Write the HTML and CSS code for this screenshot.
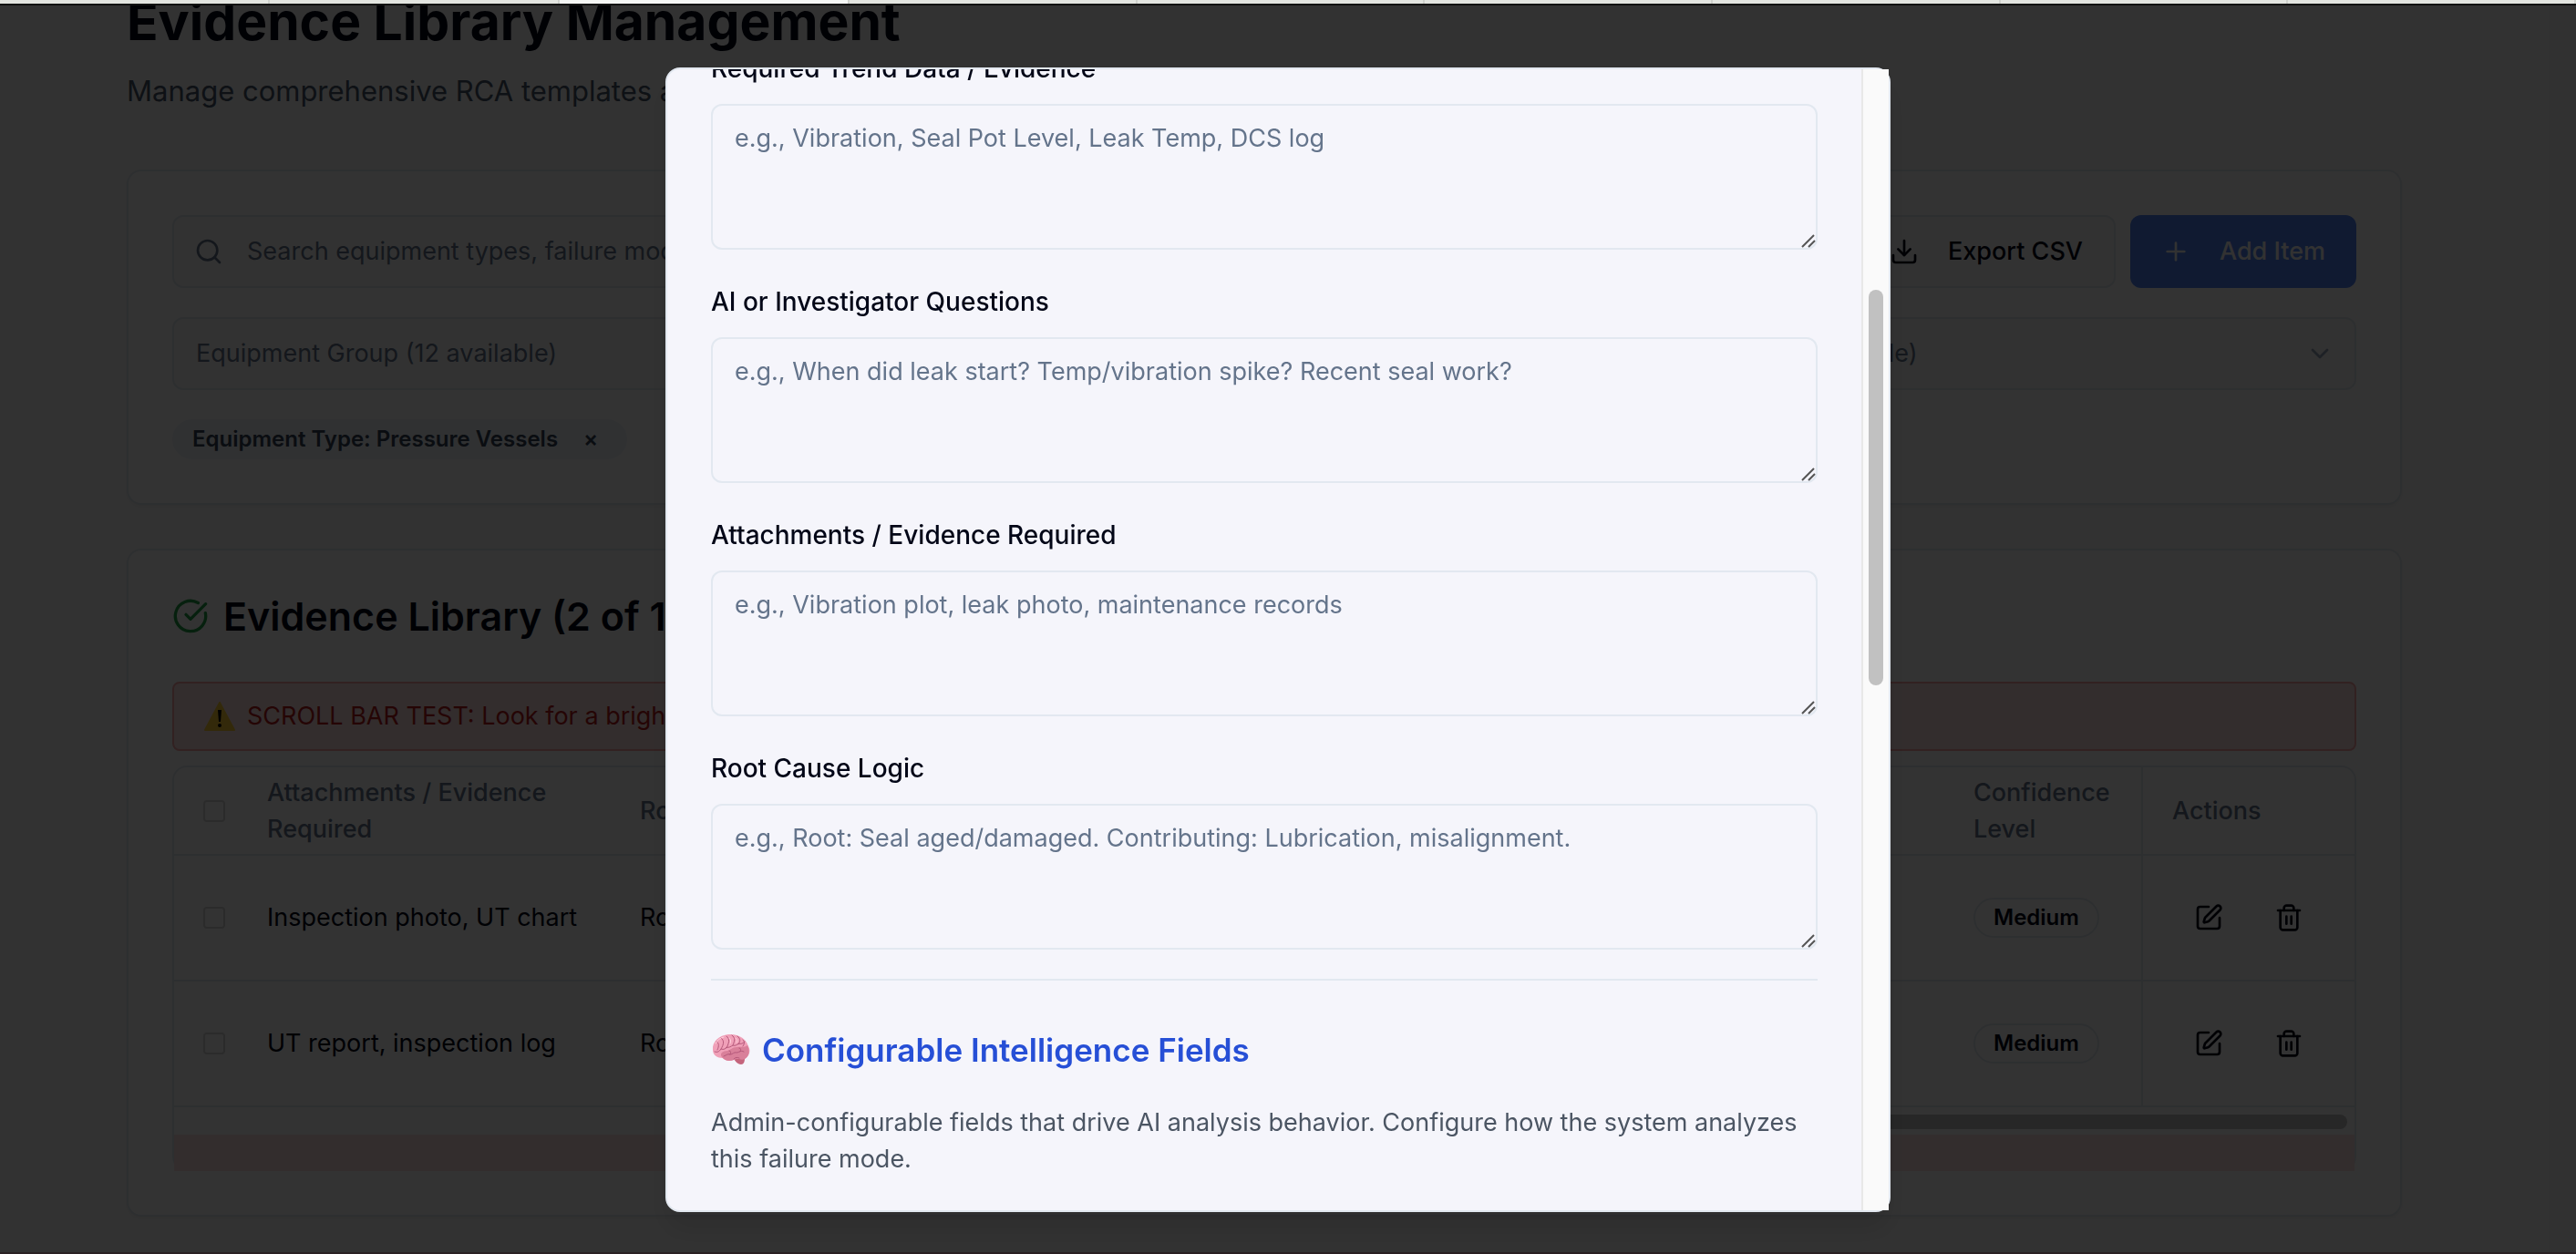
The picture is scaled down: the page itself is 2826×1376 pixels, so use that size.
FILE: index.html
```html
<!DOCTYPE html>
<html lang="en">
<head>
<meta charset="utf-8">
<title>Evidence Library Management</title>
<link rel="stylesheet" href="styles.css">
</head>
<body>
<div class="tabstrip" aria-hidden="true">
  <span class="tab tab-first"></span><span class="tab tab-second"></span><span class="tab tab-active"></span><span class="tab"></span><span class="tab"></span><span class="tab"></span><span class="tab"></span><span class="tab"></span><span class="tab"></span>
</div>
<div class="viewport">
<main class="page">
  <header class="page-head">
    <h1>Evidence Library Management</h1>
    <p>Manage comprehensive RCA templates and evidence requirements</p>
  </header>

  <section class="card filters">
    <div class="toolbar">
      <div class="search">
        <svg class="icon" viewBox="0 0 24 24"><circle cx="11" cy="11" r="8"/><path d="m21 21-4.3-4.3"/></svg>
        <input type="text" aria-label="Search" placeholder="Search equipment types, failure modes, or codes...">
      </div>
      <button class="btn btn-outline" type="button">
        <svg class="icon" viewBox="0 0 24 24"><path d="M21 15v4a2 2 0 0 1-2 2H5a2 2 0 0 1-2-2v-4"/><path d="m7 10 5 5 5-5"/><path d="M12 15V3"/></svg>
        Export CSV
      </button>
      <button class="btn btn-primary" type="button">
        <svg class="icon" viewBox="0 0 24 24"><path d="M5 12h14"/><path d="M12 5v14"/></svg>
        Add Item
      </button>
    </div>
    <div class="selects">
      <div class="select-wrap">
        <select aria-label="Equipment group"><option>Equipment Group (12 available)</option></select>
        <svg class="icon chevron" viewBox="0 0 24 24"><path d="m6 9 6 6 6-6"/></svg>
      </div>
      <div class="select-wrap">
        <select aria-label="Equipment type"><option>Equipment Type (1 selected)</option></select>
        <svg class="icon chevron" viewBox="0 0 24 24"><path d="m6 9 6 6 6-6"/></svg>
      </div>
      <div class="select-wrap">
        <select aria-label="Subtype"><option>Subtype (8 available)</option></select>
        <svg class="icon chevron" viewBox="0 0 24 24"><path d="m6 9 6 6 6-6"/></svg>
      </div>
    </div>
    <div class="chips">
      <span class="chip">Equipment Type: Pressure Vessels <button type="button" aria-label="Remove filter">×</button></span>
    </div>
  </section>

  <section class="card library">
    <h2><svg class="icon icon-ok" viewBox="0 0 24 24"><path d="M21.801 10A10 10 0 1 1 17 3.335"/><path d="m9 11 3 3L22 4"/></svg>Evidence Library (2 of 100 items)</h2>
    <div class="alert">
      <svg class="warn" viewBox="0 0 36 36"><path d="M18 3 34 33H2Z" fill="#fc3" stroke="#fc3" stroke-width="2" stroke-linejoin="round"/><path d="M16 11h4l-1 13h-2z" fill="#000"/><circle cx="18" cy="28" r="2" fill="#000"/></svg>
      <span>SCROLL BAR TEST: Look for a bright scrollbar below</span>
    </div>
    <div class="table-box">
      <table>
        <colgroup><col class="c-check"><col class="c-attach"><col><col class="c-conf"><col class="c-act"></colgroup>
        <thead>
          <tr>
            <th><input type="checkbox" aria-label="Select all"></th>
            <th>Attachments / Evidence Required</th>
            <th>Root Cause Logic</th>
            <th>Confidence Level</th>
            <th class="pinned">Actions</th>
          </tr>
        </thead>
        <tbody>
          <tr>
            <td><input type="checkbox" aria-label="Select row 1"></td>
            <td>Inspection photo, UT chart</td>
            <td>Root: Corrosion</td>
            <td><span class="badge">Medium</span></td>
            <td class="pinned"><div class="actions">
              <button type="button" aria-label="Edit"><svg class="icon" viewBox="0 0 24 24"><path d="M12 3H5a2 2 0 0 0-2 2v14a2 2 0 0 0 2 2h14a2 2 0 0 0 2-2v-7"/><path d="M18.375 2.625a1 1 0 0 1 3 3l-9.013 9.014a2 2 0 0 1-.853.505l-2.873.84a.5.5 0 0 1-.62-.62l.84-2.873a2 2 0 0 1 .506-.852z"/></svg></button>
              <button type="button" aria-label="Delete"><svg class="icon" viewBox="0 0 24 24"><path d="M3 6h18"/><path d="M19 6v14c0 1-1 2-2 2H7c-1 0-2-1-2-2V6"/><path d="M8 6V4c0-1 1-2 2-2h4c1 0 2 1 2 2v2"/><path d="M10 11v6"/><path d="M14 11v6"/></svg></button>
            </div></td>
          </tr>
          <tr>
            <td><input type="checkbox" aria-label="Select row 2"></td>
            <td>UT report, inspection log</td>
            <td>Root: Fatigue</td>
            <td><span class="badge">Medium</span></td>
            <td class="pinned"><div class="actions">
              <button type="button" aria-label="Edit"><svg class="icon" viewBox="0 0 24 24"><path d="M12 3H5a2 2 0 0 0-2 2v14a2 2 0 0 0 2 2h14a2 2 0 0 0 2-2v-7"/><path d="M18.375 2.625a1 1 0 0 1 3 3l-9.013 9.014a2 2 0 0 1-.853.505l-2.873.84a.5.5 0 0 1-.62-.62l.84-2.873a2 2 0 0 1 .506-.852z"/></svg></button>
              <button type="button" aria-label="Delete"><svg class="icon" viewBox="0 0 24 24"><path d="M3 6h18"/><path d="M19 6v14c0 1-1 2-2 2H7c-1 0-2-1-2-2V6"/><path d="M8 6V4c0-1 1-2 2-2h4c1 0 2 1 2 2v2"/><path d="M10 11v6"/><path d="M14 11v6"/></svg></button>
            </div></td>
          </tr>
        </tbody>
      </table>
      <div class="h-scroll"><div class="h-thumb"></div></div>
      <div class="h-zone"></div>
    </div>
  </section>
</main>
<div class="page-scroll"></div>
</div>

<div class="overlay">
  <div class="dialog" role="dialog" aria-modal="true" aria-label="Add evidence item">
    <div class="dialog-body">
      <form class="form">
        <div class="field">
          <label for="trend">Required Trend Data / Evidence</label>
          <div class="area"><textarea id="trend" placeholder="e.g., Vibration, Seal Pot Level, Leak Temp, DCS log"></textarea><svg class="grip" viewBox="0 0 16 16"><path d="M1 15 14 2M8 15 15 8"/></svg></div>
        </div>
        <div class="field">
          <label for="questions">AI or Investigator Questions</label>
          <div class="area"><textarea id="questions" placeholder="e.g., When did leak start? Temp/vibration spike? Recent seal work?"></textarea><svg class="grip" viewBox="0 0 16 16"><path d="M1 15 14 2M8 15 15 8"/></svg></div>
        </div>
        <div class="field">
          <label for="attach">Attachments / Evidence Required</label>
          <div class="area"><textarea id="attach" placeholder="e.g., Vibration plot, leak photo, maintenance records"></textarea><svg class="grip" viewBox="0 0 16 16"><path d="M1 15 14 2M8 15 15 8"/></svg></div>
        </div>
        <div class="field">
          <label for="root">Root Cause Logic</label>
          <div class="area"><textarea id="root" placeholder="e.g., Root: Seal aged/damaged. Contributing: Lubrication, misalignment."></textarea><svg class="grip" viewBox="0 0 16 16"><path d="M1 15 14 2M8 15 15 8"/></svg></div>
        </div>
        <div class="config">
          <h3>
            <svg class="brain" viewBox="0 0 44 36"><path d="M24 26c2 4 5 8 9 8 3 0 4-3 4-7z" fill="#c4647c"/><path d="M2 18C1 9 9 2 19 1c11-1 20 5 22 13 3 5 1 11-4 14-6 1-9-1-12 1-5 2-9 1-12-2C7 27 2 24 2 18Z" fill="#f0a0b8"/><path d="M12 26c-3-4 1-7 6-7 4-1 5-4 10-4 5-1 8 1 12-2 3 6 2 12-3 15-6 1-9-1-12 1-5 2-10 1-13-3Z" fill="#d9809a"/><g fill="none" stroke="#b5587a" stroke-width="1" stroke-linecap="round"><path d="M6 9c3 1 3 5 1 9M11 5c4 3 3 7 0 12M17 3c4 3 3 7 0 13M23 2c4 3 3 6 1 11M29 3c4 3 3 6 1 9M35 7c2 2 2 4 0 7M4 20c3 1 5 0 7-3 3 1 5 0 6-2 3 1 5-1 7-2 3 1 5-1 6-2 3 1 5 0 7-2M14 25c3-1 4-3 7-2 3 0 4-3 7-2 3 0 4-3 8-1M20 19c2 0 2 2 1 4M31 16c2 0 2 2 1 4M25 28c2-2 4-2 6-1"/></g><path d="M5 11c2-4 5-6 9-7M20 5c2 2 2 4 1 6M27 5c2 2 2 3 1 5" fill="none" stroke="#ffd0dc" stroke-width="1" stroke-linecap="round"/></svg>
            Configurable Intelligence Fields</h3>
          <p>Admin-configurable fields that drive AI analysis behavior. Configure how the system analyzes this failure mode.</p>
        </div>
      </form>
    </div>
    <div class="v-track"><div class="v-thumb"></div></div>
  </div>
</div>
</body>
</html>
```

FILE: styles.css
```css
* { box-sizing: border-box; }
html, body { height: 100%; }
body {
  margin: 0;
  display: flex;
  flex-direction: column;
  overflow: hidden;
  background: #fafafa;
  color: #020617;
  font-family: Inter, "Liberation Sans", sans-serif;
  font-size: 32px;
  line-height: 48px;
}
h1, h2, h3, p { margin: 0; }
button, input, select, textarea { font: inherit; color: inherit; }

.icon {
  width: 32px;
  height: 32px;
  flex: none;
  fill: none;
  stroke: currentColor;
  stroke-width: 2;
  stroke-linecap: round;
  stroke-linejoin: round;
}

.tabstrip {
  display: flex;
  flex: none;
  height: 4px;
  background: #e3e5e0;
}
.tab { flex: 1; border-right: 2px solid #cfd1cc; }
.tab-first { flex: none; width: 296px; }
.tab-second { flex: none; width: 318px; }
.tab-active { flex: none; width: 318px; background: #f4f6f4; }

.viewport {
  flex: 1;
  min-height: 0;
  display: flex;
  overflow: hidden;
}
.page {
  flex: 1;
  min-width: 0;
  padding: 0 161px 0 139px;
}
.page-scroll { width: 30px; background: #f2f2f2; }

.page-head { height: 198px; }
h1 {
  margin-top: -16px;
  font-size: 57px;
  font-weight: 700;
  line-height: 72px;
}
.page-head p { margin-top: 16px; color: #475569; font-size: 31px; }

.card {
  padding: 48px;
  border: 2px solid #e2e8f0;
  border-radius: 16px;
  background: #fff;
  box-shadow: 0 2px 4px rgba(0, 0, 0, .05);
}
.card + .card { margin-top: 48px; }

.toolbar { display: flex; gap: 16px; }
.search {
  flex: 1;
  display: flex;
  align-items: center;
  gap: 26px;
  height: 80px;
  padding: 0 22px;
  border: 2px solid #e2e8f0;
  border-radius: 12px;
  background: #fafafa;
  color: #64748b;
  font-size: 27px;
}
.search input {
  flex: 1;
  border: 0;
  padding: 0;
  background: none;
  outline: 0;
}
.search input::placeholder { color: #64748b; opacity: 1; }
.btn {
  display: flex;
  align-items: center;
  gap: 32px;
  height: 80px;
  padding: 0 34px;
  border: 2px solid #e2e8f0;
  border-radius: 12px;
  background: #fafafa;
  font-size: 27px;
  font-weight: 500;
}
.btn-primary {
  border: 0;
  background: #4f83f5;
  color: #fafafa;
}

.selects {
  display: grid;
  grid-template-columns: repeat(3, 1fr);
  gap: 32px;
  margin-top: 32px;
}
.select-wrap { display: grid; align-items: center; }
.select-wrap > * { grid-area: 1 / 1; }
.select-wrap select {
  appearance: none;
  width: 100%;
  height: 80px;
  padding: 0 24px;
  border: 2px solid #e2e8f0;
  border-radius: 12px;
  background: #fafafa;
  color: #64748b;
  font-size: 27px;
}
.chevron { justify-self: end; margin-right: 24px; color: #94a3b8; }

.chips { display: flex; margin-top: 32px; }
.chip {
  display: flex;
  align-items: center;
  gap: 28px;
  height: 44px;
  padding: 0 32px 0 22px;
  border-radius: 22px;
  background: #eff4fb;
  color: #334155;
  font-size: 24px;
  font-weight: 600;
}
.chip button { padding: 0; border: 0; background: none; }

h2 {
  display: flex;
  align-items: center;
  gap: 16px;
  font-size: 43px;
  font-weight: 600;
  line-height: 48px;
}
.icon-ok { width: 40px; height: 40px; color: #22a045; }

.alert {
  display: flex;
  align-items: center;
  gap: 12px;
  height: 76px;
  margin-top: 48px;
  padding: 0 32px;
  border: 2px solid #f8a5a5;
  border-radius: 8px;
  background: #fee2e2;
  color: #b91c1c;
  font-size: 27px;
}
.warn { width: 36px; height: 36px; }

.table-box {
  margin-top: 16px;
  border: 2px solid #e2e8f0;
  border-bottom: 0;
  border-radius: 16px;
  font-size: 27px;
  line-height: 40px;
}
table {
  width: 100%;
  table-layout: fixed;
  border-collapse: separate;
  border-spacing: 0;
}
.c-check { width: 70px; }
.c-attach { width: 409px; }
.c-conf { width: 216px; }
.c-act { width: 234px; }
th, td {
  padding: 0 32px;
  border-bottom: 2px solid #e2e8f0;
  text-align: left;
  vertical-align: middle;
}
th { height: 97px; color: #64748b; font-weight: 500; }
th:first-child, td:first-child { padding-right: 0; }
th:nth-child(4) { padding-right: 0; }
td { height: 138px; white-space: nowrap; }
.pinned { border-left: 2px solid #e2e8f0; }
input[type="checkbox"] {
  appearance: none;
  display: block;
  width: 24px;
  height: 24px;
  margin: 0;
  border: 2px solid #d6d6d6;
  border-radius: 4px;
  background: #fff;
}
.badge {
  display: inline-flex;
  align-items: center;
  height: 44px;
  padding: 0 20px;
  border: 2px solid #e2e8f0;
  border-radius: 22px;
  font-size: 24px;
  font-weight: 600;
}
.actions { display: flex; gap: 8px; }
.actions button {
  display: flex;
  padding: 20px 24px;
  border: 0;
  background: none;
}
.h-scroll { height: 30px; padding: 8px; }
.h-thumb { height: 16px; margin-left: 50%; border-radius: 8px; background: #c1c1c1; }
.h-zone { height: 40px; background: #fee2e2; }

.overlay {
  position: fixed;
  inset: 4px 0 0;
  display: flex;
  justify-content: center;
  padding: 68px 22px 44px 0;
  border-top: 2px solid #121212;
  border-bottom: 2px solid #2a2023;
  background: rgba(0, 0, 0, .8);
}
.dialog {
  display: flex;
  width: 100%;
  max-width: 1344px;
  border: 2px solid #e2e8f0;
  border-radius: 16px;
  background: #f5f5fb;
  box-shadow: 0 20px 30px rgba(0, 0, 0, .1);
}
.dialog-body {
  flex: 1;
  min-width: 0;
  overflow: hidden;
  padding: 0 48px;
}
.form {
  display: flex;
  flex-direction: column;
  gap: 32px;
  margin-top: -26px;
}
.field label {
  font-size: 28px;
  font-weight: 500;
  line-height: 28px;
}
.area { display: grid; margin-top: 16px; }
.area > * { grid-area: 1 / 1; }
.area textarea {
  display: block;
  width: 100%;
  height: 160px;
  padding: 16px 24px;
  border: 2px solid #e2e8f0;
  border-radius: 12px;
  background: #f5f5fb;
  font-size: 27px;
  line-height: 40px;
  resize: none;
  outline: 0;
}
.area textarea::placeholder { color: #64748b; opacity: 1; }
.grip {
  place-self: end;
  width: 16px;
  height: 16px;
  margin: 2px;
  fill: none;
  stroke: #555;
  stroke-width: 2;
}
.config { padding-top: 48px; border-top: 2px solid #e2e8f0; }
h3 {
  display: flex;
  align-items: center;
  gap: 12px;
  color: #264fd6;
  font-size: 35px;
  font-weight: 600;
  line-height: 56px;
}
.brain { width: 44px; height: 36px; }
.config p {
  margin-top: 32px;
  color: #4b5563;
  font-size: 27px;
  line-height: 40px;
}
.v-track {
  width: 30px;
  padding: 242px 6px 0;
  border-left: 2px solid #e8e8e8;
  background: #fafafa;
}
.v-thumb { width: 16px; height: 434px; border-radius: 8px; background: #c1c1c1; }
```
